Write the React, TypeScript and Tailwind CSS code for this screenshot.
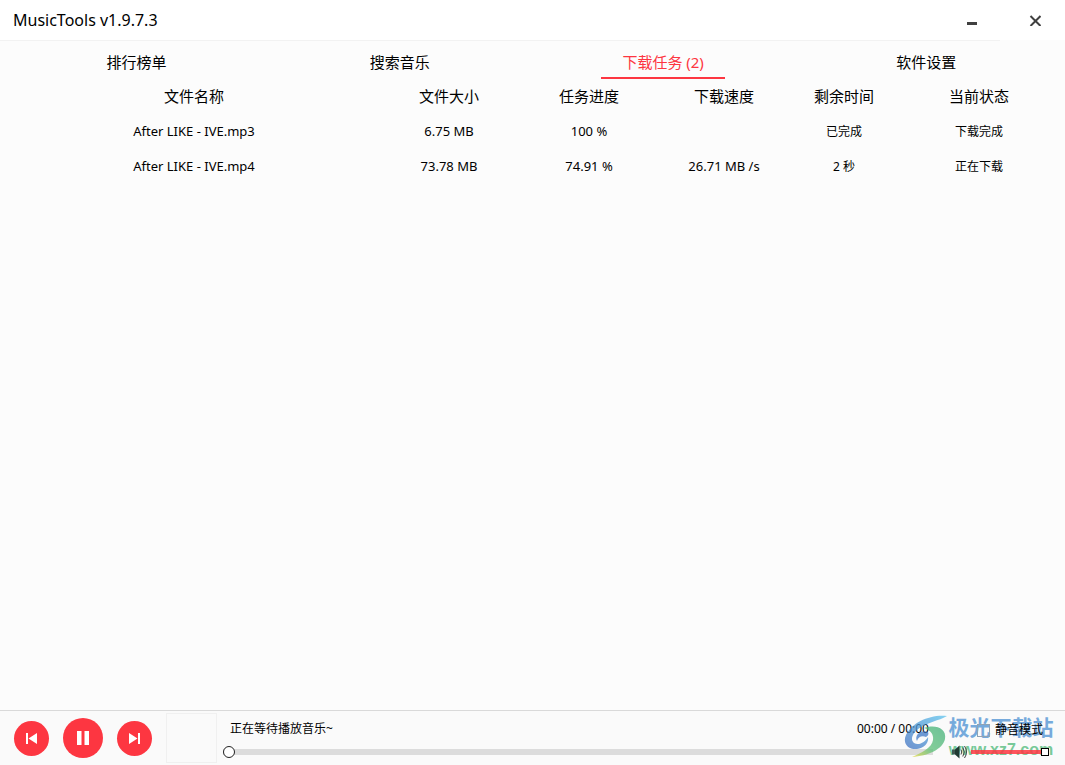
import React, { useState } from "react";

const tabs = ["排行榜单", "搜索音乐", "下载任务 (2)", "软件设置"];

const columns = [
  { title: "文件名称", width: "w-[380px]", text: "text-[13px]" },
  { title: "文件大小", width: "w-[130px]", text: "text-[13px]" },
  { title: "任务进度", width: "w-[150px]", text: "text-[13px]" },
  { title: "下载速度", width: "w-[120px]", text: "text-[13px]" },
  { title: "剩余时间", width: "w-[120px]", text: "text-xs" },
  { title: "当前状态", width: "w-[150px]", text: "text-xs" },
];

const tasks = [
  ["After LIKE - IVE.mp3", "6.75 MB", "100 %", "", "已完成", "下载完成"],
  ["After LIKE - IVE.mp4", "73.78 MB", "74.91 %", "26.71 MB /s", "2 秒", "正在下载"],
];

function TitleBar() {
  return (
    <header className="flex h-10 items-center justify-between bg-white pl-[13px]">
      <h1 className="text-base">MusicTools v1.9.7.3</h1>
      <div className="flex h-full text-[#404040]">
        <button type="button" aria-label="最小化" className="flex w-16 items-center justify-center">
          <svg width="12" height="12" viewBox="0 0 12 12" fill="currentColor">
            <path d="M1 8h10v3H1z" />
          </svg>
        </button>
        <button type="button" aria-label="关闭" className="flex w-[61px] items-center justify-center">
          <svg width="12" height="12" viewBox="0 0 12 12" fill="none" stroke="currentColor" strokeWidth="2">
            <path d="M1.500 2l10 10M11.500 2l-10 10" />
          </svg>
        </button>
      </div>
    </header>
  );
}

function Tabs({ active, onChange }: { active: number; onChange: (i: number) => void }) {
  return (
    <nav className="mr-[65px] border-t border-[#f2f2f2]">
      <div className="-mr-[65px] grid grid-cols-4 pr-[7px] pl-[5px]">
        {tabs.map((tab, i) => (
          <div key={tab} className="flex justify-center">
            <button
              type="button"
              onClick={() => onChange(i)}
              className={
                i === active
                  ? "h-[38px] w-[124px] border-b-2 border-[#fd3641] pt-1.5 text-[15px] text-[#fd3641]"
                  : "h-[38px] w-[124px] border-b-2 border-transparent pt-1.5 text-[15px]"
              }
            >
              {tab}
            </button>
          </div>
        ))}
      </div>
    </nav>
  );
}

function TaskTable() {
  return (
    <div className="pr-[11px] pl-1">
      <table className="w-full table-fixed text-center">
        <thead>
          <tr className="h-[35px] text-[15px]">
            {columns.map((col) => (
              <th key={col.title} className={`${col.width} font-normal`}>
                {col.title}
              </th>
            ))}
          </tr>
        </thead>
        <tbody>
          {tasks.map((task) => (
            <tr key={task[0]} className="h-[35px]">
              {task.map((cell, i) => (
                <td key={i} className={columns[i].text}>
                  {cell}
                </td>
              ))}
            </tr>
          ))}
        </tbody>
      </table>
    </div>
  );
}

function Controls() {
  return (
    <div className="flex items-center gap-[14px] pl-[14px]">
      <button type="button" aria-label="上一首" className="rounded-full bg-[#fd3641] text-white">
        <svg width="35" height="35" viewBox="0 0 35 35" fill="currentColor">
          <path d="M12 12h2v11h-2zM23 12v11l-8.500-5.500z" />
        </svg>
      </button>
      <button type="button" aria-label="暂停" className="rounded-full bg-[#fd3641] text-white">
        <svg width="40" height="40" viewBox="0 0 40 40" fill="currentColor">
          <path d="M14 13h4.500v14H14zM21.500 13H26v14h-4.500z" />
        </svg>
      </button>
      <button type="button" aria-label="下一首" className="rounded-full bg-[#fd3641] text-white">
        <svg width="35" height="35" viewBox="0 0 35 35" fill="currentColor">
          <path d="M21 12h2v11h-2zM12 12v11l8.500-5.500z" />
        </svg>
      </button>
      <div className="h-[50px] w-[51px] border border-[#f0f0f0]" />
    </div>
  );
}

function SpeakerIcon() {
  return (
    <svg width="16" height="16" viewBox="0 0 16 16" fill="none">
      <path d="M1 5.500h3v5H1z" fill="#3f5850" />
      <path d="M4 5.500L8.500 1.500v13L4 10.500z" fill="#1f3a32" />
      <path d="M10 5.500q1.500 2.500 0 5M11.800 3.500q3 4.500 0 9M13.500 2q4 6 0 12" stroke="#444" />
    </svg>
  );
}

function Watermark() {
  return (
    <div className="pointer-events-none absolute top-1 right-[11px] flex opacity-75">
      <svg width="44" height="43" viewBox="0 0 44 43" fill="none">
        <defs>
          <linearGradient id="swirl" x1="0" y1="1" x2="1" y2="0">
            <stop offset="0" stopColor="#3f6fc0" />
            <stop offset="1" stopColor="#5cc4ee" />
          </linearGradient>
          <linearGradient id="leaf" x1="0" y1="1" x2="1" y2="0">
            <stop offset="0" stopColor="#e8d83c" />
            <stop offset="0.400" stopColor="#5cbf78" />
            <stop offset="1" stopColor="#3fae78" />
          </linearGradient>
        </defs>
        <path
          d="M43 1C27-1 8 7 2 20c-4 9 3 15 11 14 7-1 12-6 11-12-3 5-9 9-14 6-5-4 0-12 7-16C25 7 34 6 43 1z"
          fill="url(#swirl)"
        />
        <path d="M24 17c-7-3-14 3-11 9 1-4 5-6 9-4 2-1 3-3 2-5z" fill="#3f78c6" />
        <path
          d="M20 13c11-4 23 0 21 11-2 10-17 17-33 18 9-4 20-9 21-17 1-6-3-10-9-12z"
          fill="url(#leaf)"
        />
      </svg>
      <div className="flex w-[106px] flex-col items-center">
        <span className="text-[21px] leading-[25px] font-bold whitespace-nowrap text-[#4a90d2]">极光下载站</span>
        <span className="font-['Liberation_Sans'] text-base leading-5 font-bold text-[#4cb978]">www.xz7.com</span>
      </div>
    </div>
  );
}

function Player() {
  const [position, setPosition] = useState(0);
  const [volume, setVolume] = useState(100);
  return (
    <footer className="relative flex h-[55px] border-t border-[#d9d9d9] bg-[#fafafa] text-xs">
      <Controls />
      <div className="ml-1.5 flex min-w-0 flex-1 flex-col pt-2">
        <div className="flex justify-between pr-1 pl-[7px] leading-5">
          <span>正在等待播放音乐~</span>
          <span>00:00 / 00:00</span>
        </div>
        <input
          type="range"
          aria-label="播放进度"
          value={position}
          onChange={(e) => setPosition(Number(e.target.value))}
          className="mt-[7px] h-3 w-full appearance-none bg-transparent [&::-webkit-slider-runnable-track]:h-1.5 [&::-webkit-slider-runnable-track]:bg-[#dcdcdc] [&::-webkit-slider-thumb]:-mt-[3px] [&::-webkit-slider-thumb]:size-3 [&::-webkit-slider-thumb]:appearance-none [&::-webkit-slider-thumb]:rounded-full [&::-webkit-slider-thumb]:border [&::-webkit-slider-thumb]:border-[#222222] [&::-webkit-slider-thumb]:bg-white"
        />
      </div>
      <Watermark />
      <div className="relative flex w-[132px] flex-col pt-[9px] pl-[18px]">
        <label className="flex items-center gap-[5px] pl-[26px] leading-5">
          <input type="checkbox" className="size-[13px] appearance-none border border-[#8fa3b5]" />
          静音模式
        </label>
        <div className="flex items-center gap-1 pt-1">
          <SpeakerIcon />
          <input
            type="range"
            aria-label="音量"
            value={volume}
            onChange={(e) => setVolume(Number(e.target.value))}
            className="h-2 w-[78px] appearance-none bg-transparent [&::-webkit-slider-runnable-track]:h-1 [&::-webkit-slider-runnable-track]:bg-[#fd3641]/85 [&::-webkit-slider-thumb]:-mt-0.5 [&::-webkit-slider-thumb]:size-2 [&::-webkit-slider-thumb]:appearance-none [&::-webkit-slider-thumb]:border [&::-webkit-slider-thumb]:border-black [&::-webkit-slider-thumb]:bg-white"
          />
        </div>
      </div>
    </footer>
  );
}

function App() {
  const [active, setActive] = useState(2);
  return (
    <div className="flex min-h-screen flex-col bg-[#fcfcfc] font-['Noto_Sans','Noto_Sans_CJK_SC',sans-serif] text-black">
      <TitleBar />
      <Tabs active={active} onChange={setActive} />
      <main className="flex-1">
        <TaskTable />
      </main>
      <Player />
    </div>
  );
}

export default App;
